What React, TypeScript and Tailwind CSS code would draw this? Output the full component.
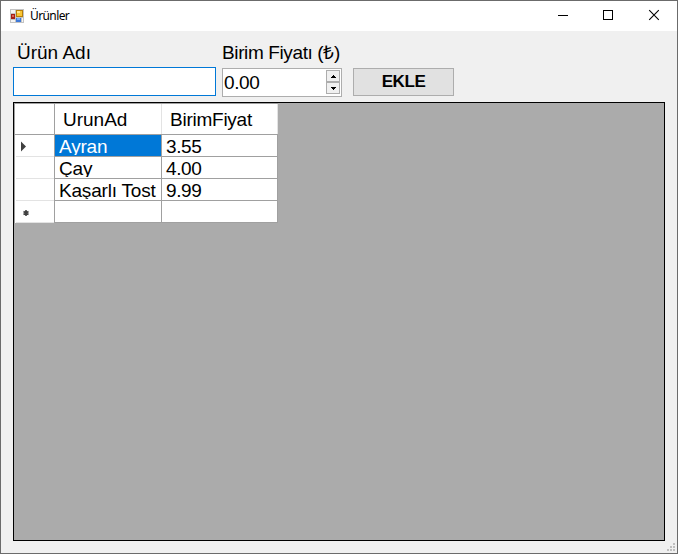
import React from "react";

const rows = [
  { name: "Ayran", price: "3.55", selected: true },
  { name: "Çay", price: "4.00", selected: false },
  { name: "Kaşarlı Tost", price: "9.99", selected: false },
  { name: "", price: "", selected: false },
];

function AppIcon() {
  return (
    <svg width="14" height="14" viewBox="0 0 14 14" shapeRendering="crispEdges">
      <rect width="14" height="14" fill="#c3c3c3" />
      <path d="M1 1h4v3H1zM1 11h4v2H1zM12 9h1v4h-1z" fill="#f4f4f4" />
      <rect x="6" y="1" width="7" height="7" fill="#b77e08" />
      <rect x="7" y="2" width="5" height="5" fill="#f9c534" />
      <rect x="7" y="2" width="3" height="2" fill="#ffe48b" />
      <rect x="1" y="5" width="4" height="5" fill="#a51e16" />
      <rect x="2" y="6" width="2" height="2" fill="#dc6457" />
      <rect x="6" y="9" width="5" height="4" fill="#3d78d8" />
      <rect x="7" y="9" width="3" height="2" fill="#79aaf4" />
    </svg>
  );
}

function TitleBar() {
  return (
    <header className="flex h-[30px] shrink-0 items-center bg-white pl-[9px]">
      <AppIcon />
      <h1 className="ml-[6px] flex-1 font-['Noto_Sans',sans-serif] text-[12px] leading-[16px] tracking-[-0.6px]">
        Ürünler
      </h1>
      <div className="flex h-full w-[136px]">
        <button className="h-full w-[45px]" aria-label="minimize">
          <svg width="45" height="30" shapeRendering="crispEdges">
            <path d="M17 14h10v1H17z" />
          </svg>
        </button>
        <button className="h-full w-[46px]" aria-label="maximize">
          <svg width="46" height="30" shapeRendering="crispEdges">
            <rect x="17.5" y="9.5" width="9" height="9" fill="none" stroke="#000" />
          </svg>
        </button>
        <button className="h-full w-[45px]" aria-label="close">
          <svg width="45" height="30">
            <path d="M17.2 9.2l9.6 9.6M26.8 9.2l-9.6 9.6" stroke="#000" strokeWidth="1.1" />
          </svg>
        </button>
      </div>
    </header>
  );
}

function SpinButton({ up }: { up: boolean }) {
  return (
    <button className="flex h-[12px] w-[14px] items-center justify-center border border-[#adadad] bg-[#f0f0f0]">
      <svg width="5" height="3" shapeRendering="crispEdges">
        <path d={up ? "M2 0h1v1h1v1h1v1H0V2h1V1h1z" : "M0 0h5v1H4v1H3v1H2V2H1V1H0z"} />
      </svg>
    </button>
  );
}

function Grid() {
  return (
    <section className="mt-[5px] h-[439px] w-[652px] border border-black bg-[#ababab]">
      <div className="w-[264px] border-l border-t border-[#a0a0a0]">
        <div className="flex h-[31px] border-b border-[#a0a0a0] bg-white leading-[31px]">
          <div className="w-[40px] border-r border-[#a0a0a0]" />
          <div className="w-[107px] border-r border-[#e3e3e3] pl-[8px]">UrunAd</div>
          <div className="w-[116px] border-r border-[#e3e3e3] pl-[8px] tracking-[-0.25px]">BirimFiyat</div>
        </div>
        {rows.map((row, i) => (
          <div key={i} className="flex h-[22px] bg-white leading-[24px]">
            <div className="w-[40px] border-r border-[#a0a0a0] pl-px">
              <div className="h-[22px] border-b border-[#e3e3e3]">
                {i === 0 && (
                  <svg width="20" height="21">
                    <path d="M5 6.5v10l5-5z" fill="#404040" />
                  </svg>
                )}
                {i === 3 && (
                  <svg width="20" height="21">
                    <path d="M10 9v6M7.5 10.5l5 3M12.5 10.5l-5 3" stroke="#404040" strokeWidth="1.6" />
                  </svg>
                )}
              </div>
            </div>
            <div
              className={
                row.selected
                  ? "w-[107px] overflow-hidden whitespace-nowrap border-b border-r border-[#a0a0a0] bg-[#0078d7] pl-[4px] tracking-[-0.2px] text-white"
                  : "w-[107px] overflow-hidden whitespace-nowrap border-b border-r border-[#a0a0a0] pl-[4px] tracking-[-0.2px]"
              }
            >
              <div className="h-[20px] overflow-hidden">{row.name}</div>
            </div>
            <div className="w-[116px] border-b border-r border-[#a0a0a0] pl-[4px] tracking-[-0.4px]">{row.price}</div>
          </div>
        ))}
      </div>
    </section>
  );
}

export default function App() {
  return (
    <div className="flex h-[554px] w-[678px] flex-col overflow-hidden border border-[#6b6b6b] bg-[#f0f0f0] font-['Liberation_Sans',Arial,sans-serif] text-[19px] text-black">
      <TitleBar />
      <main className="relative flex-1 pl-[12px] pt-[10px]">
        <div className="flex">
          <div className="w-[209px]">
            <label className="block h-[26px] pl-[4px] leading-[23px]">Ürün Adı</label>
            <input className="block h-[29px] w-[203px] border border-[#0078d7] bg-white outline-none" />
          </div>
          <div className="w-[131px]">
            <label className="block h-[27px] whitespace-nowrap leading-[23px] tracking-[-0.38px]">Birim Fiyatı (₺)</label>
            <div className="flex h-[29px] w-[120px] justify-between border border-[#adadad] bg-white pl-px leading-[27px] tracking-[-0.4px]">
              <span>0.00</span>
              <div className="flex flex-col pr-px pt-px">
                <SpinButton up />
                <SpinButton up={false} />
              </div>
            </div>
          </div>
          <button className="mt-[27px] h-[28px] w-[101px] border border-[#adadad] bg-[#e1e1e1] text-[17px] font-bold leading-[26px] tracking-[-0.4px]">
            EKLE
          </button>
        </div>
        <Grid />
        <svg className="absolute bottom-[2px] right-[2px]" width="8" height="8" shapeRendering="crispEdges">
          <path d="M6 0h2v2H6zM3 3h2v2H3zM6 3h2v2H6zM0 6h2v2H0zM3 6h2v2H3zM6 6h2v2H6z" fill="#bfbfbf" />
        </svg>
      </main>
    </div>
  );
}
